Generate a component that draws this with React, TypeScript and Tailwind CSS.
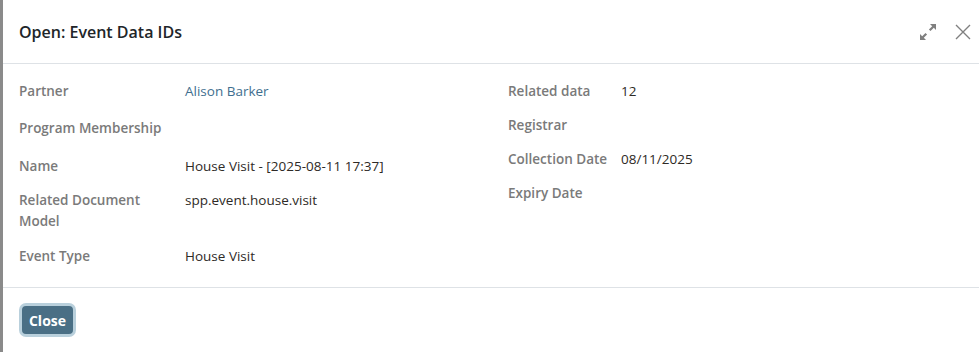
const left = [
  { label: ['Partner'], value: 'Alison Barker', link: true, h: 'h-[37px]' },
  { label: ['Program Membership'], value: '', h: 'h-[38px]' },
  { label: ['Name'], value: 'House Visit - [2025-08-11 17:37]', h: 'h-[34px]' },
  { label: ['Related Document', 'Model'], value: 'spp.event.house.visit', h: 'h-[56px]' },
  { label: ['Event Type'], value: 'House Visit', h: 'h-[34px]' },
]

const right = [
  { label: 'Related data', value: '12' },
  { label: 'Registrar', value: '' },
  { label: 'Collection Date', value: '08/11/2025' },
  { label: 'Expiry Date', value: '' },
]

function ExpandIcon() {
  return (
    <svg width="18" height="18" viewBox="0 0 18 18" fill="#808080">
      <path d="M11 1h6v6l-2.2-2.2-3.3 3.3-1.6-1.6 3.3-3.3z" />
      <path d="M7 17H1v-6l2.2 2.2 3.3-3.3 1.6 1.6-3.3 3.3z" />
    </svg>
  )
}

function CloseIcon() {
  return (
    <svg width="16" height="16" viewBox="0 0 16 16" stroke="#808080" strokeWidth="1.4" fill="none">
      <path d="M1 1l14 14M15 1L1 15" />
    </svg>
  )
}

export default function App() {
  return (
    <div
      className="w-[979px] h-[352px] bg-[#8a8a8a] pl-[3px] overflow-hidden"
      style={{ fontFamily: '"Open Sans", "Noto Sans", sans-serif' }}
    >
      <div className="bg-white h-full flex flex-col">
        {/* header */}
        <div className="h-[64px] flex items-center justify-between pl-4 pr-2 border-b border-[#dee2e6]">
          <h4 className="text-[16px] font-semibold text-[#212529]">Open: Event Data IDs</h4>
          <div className="flex items-center gap-[18px]">
            <ExpandIcon />
            <CloseIcon />
          </div>
        </div>

        {/* body */}
        <div className="flex px-4 pt-[17px] h-[224px] border-b border-[#dee2e6] text-[13.5px] leading-[21px]">
          <div className="w-[472px]">
            {left.map((r) => (
              <div key={r.label[0]} className={`flex ${r.h}`}>
                <div className="w-[166px] font-semibold text-[#7a7a7a]">
                  {r.label.map((l) => (
                    <div key={l}>{l}</div>
                  ))}
                </div>
                <div className={r.link ? 'text-[#3f6f8f]' : 'text-[#2e2a26]'}>{r.value}</div>
              </div>
            ))}
          </div>
          <div className="pl-[17px]">
            {right.map((r) => (
              <div key={r.label} className="flex h-[34px]">
                <div className="w-[113px] font-semibold text-[#7a7a7a]">{r.label}</div>
                <div className="text-[#2e2a26]">{r.value}</div>
              </div>
            ))}
          </div>
        </div>

        {/* footer */}
        <div className="px-4 pt-[15px]">
          <button className="h-[34px] w-[57px] rounded-[7px] bg-[#4a6f85] border-[3px] border-[#b9d0dc] text-white text-[14px] font-bold">
            Close
          </button>
        </div>
      </div>
    </div>
  )
}
